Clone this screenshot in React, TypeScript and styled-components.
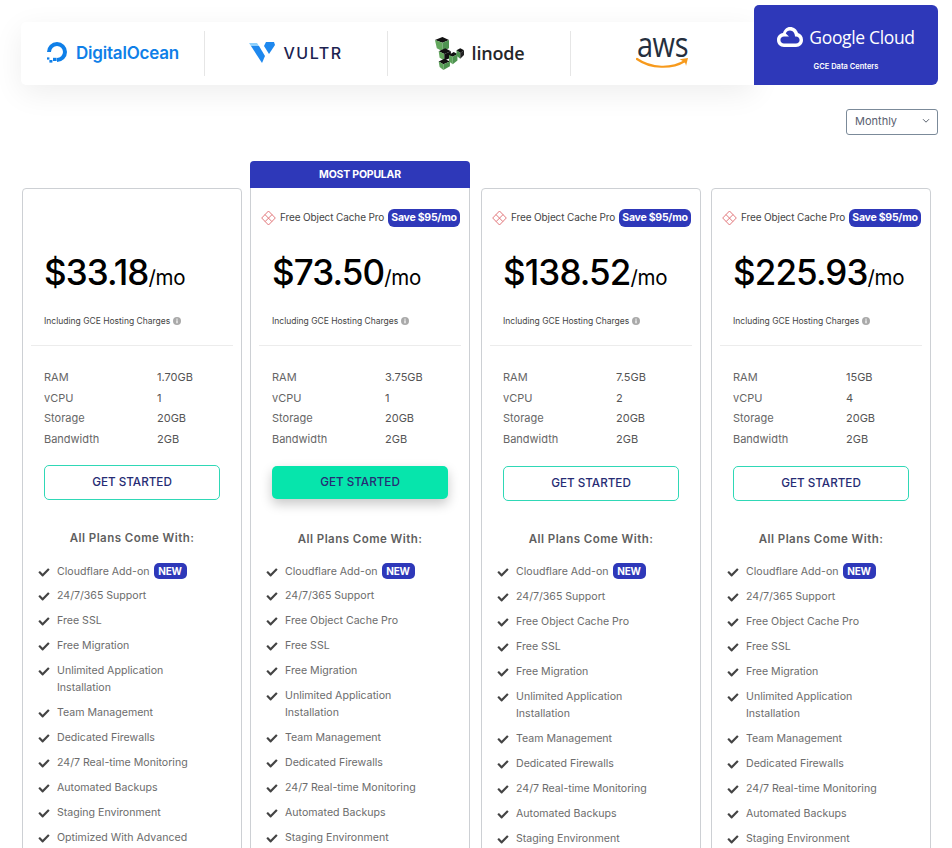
import React from "react";
import styled, { createGlobalStyle } from "styled-components";
import { FaCheck } from "react-icons/fa";

const Global = createGlobalStyle`
  html, body { margin: 0; padding: 0; background: #fff; }
  body { font-family: Inter, "Liberation Sans", sans-serif; color: #555; }
  #root { height: 848px; overflow: hidden; }
  * { box-sizing: border-box; }
`;

const Page = styled.div`
  width: 952px;
`;
const ProviderRow = styled.div`
  display: flex;
  align-items: flex-end;
  padding: 5px 0 0 21px;
`;
const ProviderBar = styled.div`
  display: flex;
  align-items: center;
  width: 733px;
  height: 63px;
  background: #fff;
  border-radius: 5px 0 0 5px;
  box-shadow: 0 8px 30px rgba(0, 0, 0, 0.07);
`;
const ProviderCell = styled.div<{ $last?: boolean; $w: number }>`
  display: flex;
  align-items: center;
  justify-content: center;
  gap: 8px;
  width: ${(p) => p.$w}px;
  height: 45px;
  padding-bottom: 2px;
  border-right: ${(p) => (p.$last ? "none" : "1px solid #e6e6e6")};
`;
const GoogleTab = styled.div`
  display: flex;
  flex-direction: column;
  align-items: center;
  width: 184px;
  height: 80px;
  padding-top: 20px;
  background: #2e38b9;
  border-radius: 5px 6px 6px 0;
`;
const GoogleLogo = styled.div`
  display: flex;
  align-items: center;
  gap: 6px;
`;
const GoogleWord = styled.span`
  font-family: "Open Sans", sans-serif;
  font-size: 17.5px;
  line-height: 24px;
  letter-spacing: -0.35px;
  color: #fff;
`;
const GoogleNote = styled.div`
  margin-top: 13px;
  font-size: 7.5px;
  line-height: 10px;
  font-weight: 600;
  color: #fff;
`;
const DoWord = styled.span`
  font-size: 17px;
  font-weight: 600;
  letter-spacing: -0.2px;
  color: #0f7fe8;
`;
const VultrWord = styled.span`
  font-size: 16px;
  font-weight: 500;
  letter-spacing: 1.5px;
  color: #1c2350;
`;
const LinodeWord = styled.span`
  font-family: "Open Sans", sans-serif;
  font-size: 18px;
  font-weight: 600;
  letter-spacing: -0.2px;
  color: #25272a;
`;
const AwsLogo = styled.div`
  display: flex;
  flex-direction: column;
  align-items: center;
  margin-top: -5px;
`;
const AwsWord = styled.span`
  font-family: "Open Sans", sans-serif;
  font-size: 29px;
  line-height: 26px;
  letter-spacing: -0.4px;
  color: #252f3e;
  transform: scaleY(1.2);
`;
const SelectRow = styled.div`
  display: flex;
  justify-content: flex-end;
  padding: 24px 14px 0 0;
`;
const PeriodSelect = styled.div`
  display: flex;
  align-items: center;
  justify-content: space-between;
  width: 92px;
  height: 26px;
  padding: 0 7px 2px 8px;
  border: 1px solid #7b8a99;
  border-radius: 3px;
  font-size: 11px;
  color: #596070;
`;
const Plans = styled.div`
  display: flex;
  align-items: flex-start;
  padding: 26px 0 0 22px;
`;
const PlanColumn = styled.div<{ $offset: number }>`
  flex: 0 0 220px;
  width: 220px;
  min-width: 0;
  margin-left: ${(p) => p.$offset}px;
`;
const Banner = styled.div`
  height: 27px;
  background: #2e38b9;
  border-radius: 4px 4px 0 0;
  color: #fff;
  font-size: 10.5px;
  font-weight: 700;
  line-height: 27px;
  letter-spacing: -0.2px;
  text-align: center;
`;
const Card = styled.div<{ $popular?: boolean }>`
  margin-top: ${(p) => (p.$popular ? 0 : 27)}px;
  padding: ${(p) => (p.$popular ? 21 : 20)}px 21px 0;
  border: 1px solid #cdd0d4;
  border-top-width: ${(p) => (p.$popular ? 0 : 1)}px;
  border-radius: ${(p) => (p.$popular ? "0" : "4px 4px 0 0")};
`;
const PromoRow = styled.div`
  display: flex;
  align-items: center;
  height: 18px;
  margin: 0 -12px 0 -11px;
`;
const PromoText = styled.span`
  margin: -2px 0 0 4px;
  font-size: 10px;
  letter-spacing: -0.12px;
  color: #444;
  white-space: nowrap;
`;
const SaveBadge = styled.span`
  margin-left: auto;
  flex: none;
  width: 72px;
  height: 18px;
  background: #2e38b9;
  border-radius: 6px;
  color: #fff;
  font-size: 10.5px;
  font-weight: 700;
  line-height: 17px;
  letter-spacing: -0.25px;
  text-align: center;
  white-space: nowrap;
`;
const PriceLine = styled.div`
  margin-top: 23px;
  height: 44px;
  line-height: 44px;
  color: #000;
  white-space: nowrap;
`;
const Amount = styled.span`
  font-size: 35px;
  font-weight: 500;
  letter-spacing: -0.9px;
`;
const Per = styled.span`
  font-size: 20.5px;
  font-weight: 400;
  letter-spacing: -0.3px;
`;
const Charges = styled.div`
  display: flex;
  align-items: center;
  gap: 3px;
  margin-top: 21px;
  height: 12px;
  font-size: 8.5px;
  color: #444;
  white-space: nowrap;
`;
const Rule = styled.div`
  height: 1px;
  margin: 18px -13px 0 -13px;
  background: #ececec;
`;
const Specs = styled.div`
  display: grid;
  grid-template-columns: 113px 1fr;
  grid-auto-rows: 20.6px;
  align-items: center;
  margin-top: 21px;
  font-size: 11px;
  color: #666;
`;
const SpecValue = styled.span`
  color: #555;
`;
const StartButton = styled.div<{ $filled?: boolean; $low?: boolean }>`
  display: flex;
  align-items: center;
  justify-content: center;
  width: 176px;
  height: ${(p) => (p.$filled ? 33 : 35)}px;
  margin-top: ${(p) => (p.$filled || p.$low ? 16.6 : 15.6)}px;
  margin-bottom: ${(p) => (p.$filled ? 32 : 30)}px;
  border: ${(p) => (p.$filled ? "none" : "1px solid #2fd8b6")};
  border-radius: 5px;
  background: ${(p) => (p.$filled ? "#06e5ac" : "#fff")};
  box-shadow: ${(p) => (p.$filled ? "0 5px 12px rgba(0,0,0,0.22)" : "none")};
  color: #262c74;
  font-size: 11.7px;
  font-weight: 500;
`;
const IncludesTitle = styled.div`
  height: 16px;
  line-height: 16px;
  font-size: 11.5px;
  font-weight: 600;
  letter-spacing: 0.45px;
  color: #5f5f5f;
  text-align: center;
`;
const Features = styled.ul<{ $tight?: boolean }>`
  list-style: none;
  margin: ${(p) => (p.$tight ? 11 : 12)}px 0 0 -6px;
  padding: 0;
`;
const Feature = styled.li<{ $nudge?: boolean }>`
  display: flex;
  align-items: flex-start;
  gap: 7px;
  padding: ${(p) => (p.$nudge ? "5px 0 3px" : "4px 0")};
  width: 172px;
  font-size: 10.6px;
  line-height: 17px;
  color: #6c6c6c;
  svg {
    flex: none;
    margin-top: 4.5px;
    width: 12px;
    height: 11px;
    color: #444;
  }
`;
const FeatureText = styled.span`
  white-space: normal;
`;
const FirstFeatureText = styled.span`
  white-space: nowrap;
`;
const NewBadge = styled.span`
  display: inline-block;
  margin-left: 4px;
  width: 33px;
  height: 16px;
  background: #2e38b9;
  border-radius: 5px;
  color: #fff;
  font-size: 10px;
  font-weight: 700;
  line-height: 16px;
  letter-spacing: -0.2px;
  text-align: center;
`;

const DoIcon = () => (
  <svg width="22" height="21" viewBox="0 0 22 21">
    <path d="M11 20 V16 A6 6 0 1 0 5 10 H1 A10 10 0 1 1 11 20 Z" fill="#0f7fe8" />
    <rect x="7" y="15.8" width="3.6" height="3.2" fill="#0f7fe8" />
    <rect x="3.4" y="18" width="3" height="2.6" fill="#0f7fe8" />
    <rect x="1" y="15.4" width="2.4" height="2.2" fill="#0f7fe8" />
  </svg>
);
const VultrIcon = () => (
  <svg width="26" height="24" viewBox="0 0 26 24">
    <path d="M0 2 H8 L10 5 H2 Z" fill="#8fd0fb" />
    <path d="M2 5 H10 L16 15 L13 22 Z" fill="#1e88ee" />
    <path d="M17 1 H25 L26 4 L20 13 L15 5 Z" fill="#1e88ee" />
  </svg>
);
const LinodeIcon = () => (
  <svg width="30" height="36" viewBox="0 0 32 36">
    <path d="M1 4 L9 1 L16 4 L9 7 Z" fill="#111" />
    <path d="M1 4 L9 7 V16 L3 13 Z" fill="#63a85d" />
    <path d="M9 7 L16 4 L16 13 L9 16 Z" fill="#4e9350" />
    <path d="M5 16 L12 13 L18 16 L11 19 Z" fill="#111" />
    <path d="M5 16 L11 19 L11 26 L6 23 Z" fill="#63a85d" />
    <path d="M11 19 L18 16 L18 23 L11 26 Z" fill="#111" />
    <path d="M5 27 L11 24 L17 27 L10 30 Z" fill="#111" />
    <path d="M5 27 L10 30 L10 36 L6 33 Z" fill="#5da25a" />
    <path d="M10 30 L17 27 V32 L10 36 Z" fill="#4e9350" />
    <path d="M16 20 L21 17 L25 19 L20 22 Z" fill="#111" />
    <path d="M16 20 L20 22 V30 L16 27 Z" fill="#5da25a" />
    <path d="M20 22 L25 19 V26 L20 30 Z" fill="#4e9350" />
    <path d="M24 15 L28 13 L32 15 L28 18 Z" fill="#111" />
    <path d="M24 15 L28 18 V24 L24 21 Z" fill="#4e9350" />
    <path d="M28 18 L32 15 V20 L28 24 Z" fill="#222" />
  </svg>
);
const AwsSmile = () => (
  <svg width="54" height="13" viewBox="0 0 54 13">
    <path d="M1 2 C 15 12, 36 12, 49 4" fill="none" stroke="#f79a1c" strokeWidth="2.2" strokeLinecap="round" />
    <path d="M43.5 2.2 L52 1 L50 9 C 50 6, 48 4, 43.5 2.2 Z" fill="#f79a1c" />
  </svg>
);
const CloudIcon = () => (
  <svg width="26" height="20" viewBox="0 0 26 20">
    <path
      fillRule="evenodd"
      fill="#fff"
      d="M13 0 C17 0 20 2.6 21 6 C24 7 26 9.6 26 13 C26 17 23 20 19 20 H7 C3 20 0 17 0 13 C0 9.4 2.6 6.6 6 6.1 C7 2.6 9.6 0 13 0 Z M7 9.5 C5 9.5 3.4 11 3.4 13 C3.4 15 5 16.6 7 16.6 H19 C21 16.6 22.6 15 22.6 13 C22.6 11 21 9.4 19 9.4 H18 C18 6 16 3.6 13 3.4 C11 3.4 9.4 4.6 8.8 6.4 L12 9.5 Z"
    />
  </svg>
);
const PromoIcon = () => (
  <svg width="15" height="16" viewBox="0 0 15 16" fill="none" stroke="#df6a6e" strokeWidth="0.9">
    <path d="M7.5 1 L14.3 8 L7.5 15 L0.7 8 Z" />
    <path d="M4 4.6 L10.8 11.5 M11 4.6 L4.2 11.5" />
  </svg>
);
const InfoIcon = () => (
  <svg width="8" height="8" viewBox="0 0 8 8">
    <circle cx="4" cy="4" r="4" fill="#a9a9a9" />
    <rect x="3.4" y="3.3" width="1.2" height="3" fill="#fff" />
    <rect x="3.4" y="1.6" width="1.2" height="1.1" fill="#fff" />
  </svg>
);
const Chevron = () => (
  <svg width="8" height="6" viewBox="0 0 8 6" fill="none" stroke="#5c6470" strokeWidth="1">
    <path d="M1 1.2 L4 4.2 L7 1.2" />
  </svg>
);

type Plan = {
  price: string;
  ram: string;
  vcpu: string;
  offset: number;
  popular?: boolean;
  promo?: boolean;
  low?: boolean;
};

const plans: Plan[] = [
  { price: "$33.18", ram: "1.70GB", vcpu: "1", offset: 0 },
  { price: "$73.50", ram: "3.75GB", vcpu: "1", offset: 8, popular: true, promo: true },
  { price: "$138.52", ram: "7.5GB", vcpu: "2", offset: 11, promo: true, low: true },
  { price: "$225.93", ram: "15GB", vcpu: "4", offset: 10, promo: true, low: true },
];

const afterFirst = ["24/7/365 Support"];
const rest = [
  "Free SSL",
  "Free Migration",
  "Unlimited Application Installation",
  "Team Management",
  "Dedicated Firewalls",
  "24/7 Real-time Monitoring",
  "Automated Backups",
  "Staging Environment",
  "Optimized With Advanced Caching",
];

const PlanCard = ({ plan }: { plan: Plan }) => {
  const items = [...afterFirst, ...(plan.promo ? ["Free Object Cache Pro"] : []), ...rest];
  return (
    <PlanColumn $offset={plan.offset}>
      {plan.popular && <Banner>MOST POPULAR</Banner>}
      <Card $popular={plan.popular}>
        <PromoRow>
          {plan.promo && (
            <>
              <PromoIcon />
              <PromoText>Free Object Cache Pro</PromoText>
              <SaveBadge>Save $95/mo</SaveBadge>
            </>
          )}
        </PromoRow>
        <PriceLine>
          <Amount>{plan.price}</Amount>
          <Per>/mo</Per>
        </PriceLine>
        <Charges>
          Including GCE Hosting Charges <InfoIcon />
        </Charges>
        <Rule />
        <Specs>
          <span>RAM</span>
          <SpecValue>{plan.ram}</SpecValue>
          <span>vCPU</span>
          <SpecValue>{plan.vcpu}</SpecValue>
          <span>Storage</span>
          <SpecValue>20GB</SpecValue>
          <span>Bandwidth</span>
          <SpecValue>2GB</SpecValue>
        </Specs>
        <StartButton $filled={plan.popular} $low={plan.low}>
          GET STARTED
        </StartButton>
        <IncludesTitle>All Plans Come With:</IncludesTitle>
        <Features $tight={plan.popular}>
          <Feature $nudge={!plan.low}>
            <FaCheck />
            <FirstFeatureText>
              Cloudflare Add-on<NewBadge>NEW</NewBadge>
            </FirstFeatureText>
          </Feature>
          {items.map((t) => (
            <Feature key={t}>
              <FaCheck />
              <FeatureText>{t}</FeatureText>
            </Feature>
          ))}
        </Features>
      </Card>
    </PlanColumn>
  );
};

export default function App() {
  return (
    <Page>
      <Global />
      <ProviderRow>
        <ProviderBar>
          <ProviderCell $w={184}>
            <DoIcon />
            <DoWord>DigitalOcean</DoWord>
          </ProviderCell>
          <ProviderCell $w={183}>
            <VultrIcon />
            <VultrWord>VULTR</VultrWord>
          </ProviderCell>
          <ProviderCell $w={183}>
            <LinodeIcon />
            <LinodeWord>linode</LinodeWord>
          </ProviderCell>
          <ProviderCell $w={183} $last>
            <AwsLogo>
              <AwsWord>aws</AwsWord>
              <AwsSmile />
            </AwsLogo>
          </ProviderCell>
        </ProviderBar>
        <GoogleTab>
          <GoogleLogo>
            <CloudIcon />
            <GoogleWord>Google Cloud</GoogleWord>
          </GoogleLogo>
          <GoogleNote>GCE Data Centers</GoogleNote>
        </GoogleTab>
      </ProviderRow>
      <SelectRow>
        <PeriodSelect>
          Monthly
          <Chevron />
        </PeriodSelect>
      </SelectRow>
      <Plans>
        {plans.map((p) => (
          <PlanCard key={p.price} plan={p} />
        ))}
      </Plans>
    </Page>
  );
}
